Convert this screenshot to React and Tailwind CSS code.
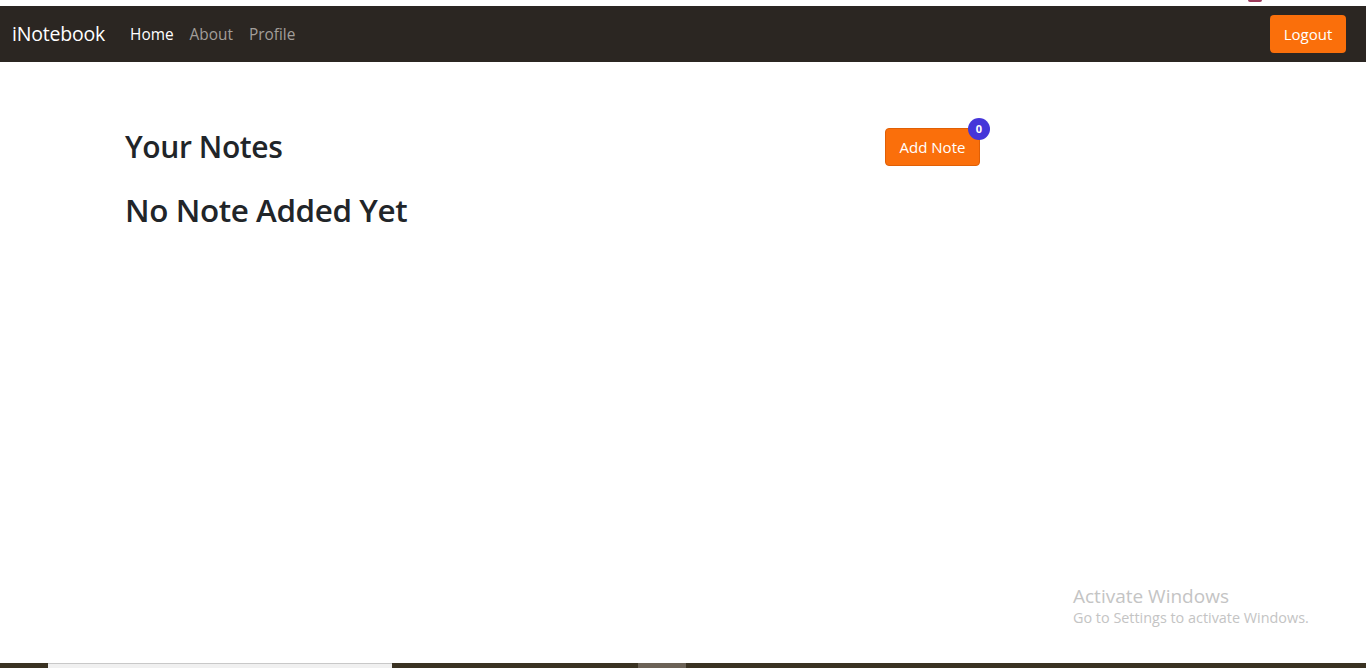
export default function App() {
  return (
    <div className="h-[668px] flex flex-col bg-white overflow-hidden" style={{ fontFamily: '"Open Sans", "Noto Sans", sans-serif' }}>
      {/* top strip of the captured window */}
      <div className="h-[6px] bg-white relative">
        <div className="absolute left-[1248px] top-0 w-[14px] h-[2px] rounded-b-full bg-[#9c3a5a]" />
      </div>

      <nav className="h-[56px] bg-[#2b2622] flex items-center px-3">
        <a className="text-[19.5px] text-white mr-[25px] tracking-[-0.2px]">iNotebook</a>
        <div className="flex items-center gap-[16px] text-[15.4px] mt-[2px]">
          <a className="text-white">Home</a>
          <a className="text-[#a29e9a]">About</a>
          <a className="text-[#a29e9a]">Profile</a>
        </div>
        <button className="ml-auto mr-[8px] h-[38px] w-[76px] rounded-[4px] bg-[#fa6f0b] text-white text-[15px]">
          Logout
        </button>
      </nav>

      <main className="flex-1 relative">
        <div className="w-[1140px] mx-auto px-3 pt-[66px]">
          <div className="flex items-start">
            <h2 className="text-[30px] leading-[1.2] font-semibold text-[#212529] w-[760px] tracking-[-0.4px] mt-[1px]">Your Notes</h2>
            <div className="relative">
              <button className="h-[38px] w-[95px] rounded-[4px] bg-[#fa6f0b] border border-[#e05f05] text-white text-[15px]">
                Add Note
              </button>
              <span className="absolute -top-[10px] -right-[10px] w-[22px] h-[22px] rounded-full bg-[#4535d9] text-white text-[11px] font-bold flex items-center justify-center">
                0
              </span>
            </div>
          </div>
          <h2 className="mt-[25px] text-[31.4px] leading-[1.2] font-semibold text-[#212529] tracking-[-0.4px]">No Note Added Yet</h2>
        </div>

        <div className="absolute left-[1073px] top-[522px] text-[#c4c4c4]">
          <div className="text-[19px] leading-[24px]">Activate Windows</div>
          <div className="text-[14.4px] leading-[20px]">Go to Settings to activate Windows.</div>
        </div>
      </main>

      {/* taskbar edge */}
      <div className="h-[5px] flex">
        <div className="w-[48px] bg-[#3a3222]" />
        <div className="w-[344px] bg-[#f0f0f0] border-t border-[#c8c8c8]" />
        <div className="w-[246px] bg-[#3a3222]" />
        <div className="w-[48px] bg-[#6b6256]" />
        <div className="flex-1 bg-[#3a3222]" />
      </div>
    </div>
  );
}
